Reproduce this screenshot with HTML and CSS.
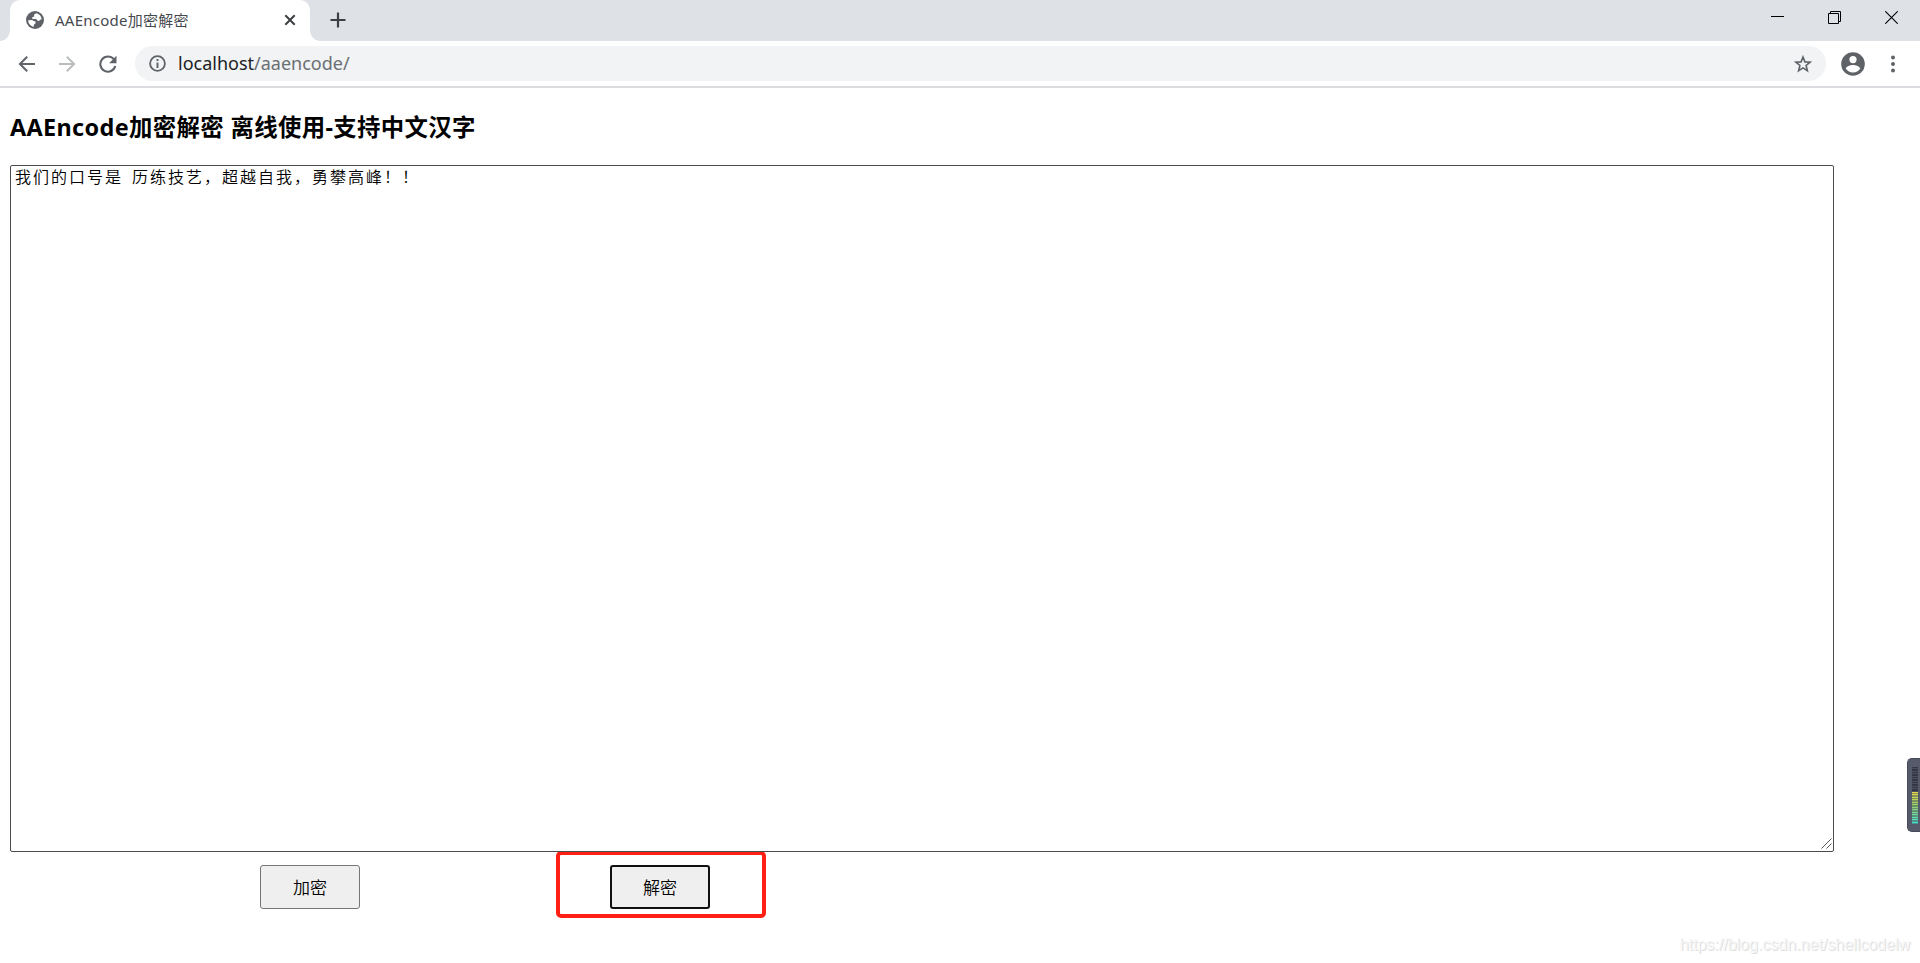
FILE: index.html
```html
<!DOCTYPE html>
<html lang="zh-CN">
<head>
  <meta charset="UTF-8" />
  <title>AAEncode加密解密</title>
  <link rel="stylesheet" href="styles.css">
</head>
<body>
  <div class="tabstrip">
    <div class="tab">
      <svg class="globe" width="18" height="18" viewBox="0 0 18 18">
        <circle cx="9" cy="9" r="9" fill="#5f6368"/>
        <path d="M10 2.2 8 3.8 8.2 5.4 6.2 6.2 6.4 8h3.8l1.2 1.6 1.5.4c.9-.6 1.2-1.6 2.7-1.7A6.8 6.8 0 0 0 10 2.2zM2.2 9.2c.1 3.4 2.4 6 5.6 6.5v-2l1.8-1.5-.1-1.8-2-.3-1.2-1.2z" fill="#fff"/>
      </svg>
      <span class="tab-title">AAEncode加密解密</span>
      <svg class="tab-close" width="12" height="12" viewBox="0 0 12 12"><path d="M1.3 1.3l9.4 9.4M10.7 1.3l-9.4 9.4" stroke="#3c4043" stroke-width="2"/></svg>
    </div>
    <svg class="new-tab" width="16" height="16" viewBox="0 0 16 16"><path d="M8 .5v15M.5 8h15" stroke="#3c4043" stroke-width="2.2"/></svg>
    <div class="win-buttons">
      <svg width="13" height="13" viewBox="0 0 13 13"><path d="M0 5.5h13" stroke="#000"/></svg>
      <svg width="13" height="13" viewBox="0 0 13 13" fill="none" stroke="#000"><path d="M.5 2.5h10v10H.5zM2.5 2.5v-2h10v10h-2"/></svg>
      <svg width="13" height="13" viewBox="0 0 13 13"><path d="M.3.3l12.4 12.4M12.7.3L.3 12.7" stroke="#000" stroke-width="1.1"/></svg>
    </div>
  </div>

  <div class="toolbar">
    <svg class="nav" width="18" height="18" viewBox="0 0 18 18" fill="none" stroke="#5f6368" stroke-width="2"><path d="M17 9H2.5M9.2 1.7L1.9 9l7.3 7.3"/></svg>
    <svg class="nav" width="18" height="18" viewBox="0 0 18 18" fill="none" stroke="#babcbe" stroke-width="2"><path d="M1 9h14.5M8.8 1.7L16.1 9l-7.3 7.3"/></svg>
    <svg class="nav reload" width="18" height="18" viewBox="0 0 18 18"><path d="M14.8 4.2A7.6 7.6 0 1 0 16.3 11" fill="none" stroke="#5f6368" stroke-width="2.1"/><path d="M17.5.8v7.4h-7.4z" fill="#5f6368"/></svg>
    <div class="omnibox">
      <svg width="17" height="17" viewBox="0 0 17 17"><circle cx="8.5" cy="8.5" r="7.4" fill="none" stroke="#5f6368" stroke-width="1.8"/><path d="M8.5 4v2M8.5 7.5V13" stroke="#5f6368" stroke-width="1.9"/></svg>
      <span class="url"><span class="host">localhost</span><span class="path">/aaencode/</span></span>
      <svg class="star" width="18" height="18" viewBox="0 0 18 18"><path d="M9 2l1.9 4.9 5.2.3-4 3.3 1.3 5.2L9 12.9l-4.4 2.8 1.3-5.2-4-3.3 5.2-.3z" fill="none" stroke="#5f6368" stroke-width="1.6"/></svg>
    </div>
    <svg class="avatar" width="24" height="24" viewBox="0 0 24 24"><circle cx="12" cy="12" r="11.8" fill="#5f6368"/><circle cx="12" cy="7.6" r="3.6" fill="#fff"/><path d="M4.8 16.8c0-2.5 4.8-3.8 7.2-3.8s7.2 1.3 7.2 3.8A8.8 8.8 0 0 1 12 20.4a8.8 8.8 0 0 1-7.2-3.6z" fill="#fff"/></svg>
    <svg class="menu" width="4" height="18" viewBox="0 0 4 18" fill="#5f6368"><circle cx="2" cy="2.4" r="2"/><circle cx="2" cy="9" r="2"/><circle cx="2" cy="15.6" r="2"/></svg>
  </div>

  <div class="content">
    <h3>AAEncode加密解密 离线使用-支持中文汉字</h3>
    <div class="editor">
      <textarea id="text" spellcheck="false">我们的口号是 历练技艺，超越自我，勇攀高峰！！</textarea>
      <svg class="grip" width="11" height="11" viewBox="0 0 11 11"><path d="M.5 10.5l10-10M5.5 10.5l5-5" stroke="#555"/></svg>
    </div>
    <div class="buttons">
      <button>加密</button>
      <div class="marked"><button class="active">解密</button></div>
    </div>
  </div>

  <div class="meter"><div class="meter-off"></div><div class="meter-on"></div></div>
  <div class="watermark">https://blog.csdn.net/shellcodelw</div>
</body>
</html>
```
FILE: styles.css
```css
body {
  margin: 0;
  height: 963px;
  overflow: hidden;
  background: #fff;
  font-family: "Noto Sans", "Noto Sans CJK SC", sans-serif;
}

svg {
  display: block;
  flex: none;
}

.tabstrip {
  display: flex;
  height: 41px;
  padding-left: 10px;
  background: #dee1e6;
}

.tab {
  position: relative;
  display: flex;
  align-items: center;
  box-sizing: border-box;
  width: 300px;
  padding: 0 14px 1px 16px;
  border-radius: 10px 10px 0 0;
  background: #fff;
}

/* curved feet of the active tab */
.tab::before,
.tab::after {
  content: "";
  position: absolute;
  bottom: 0;
  width: 10px;
  height: 10px;
}

.tab::before {
  left: -10px;
  background: radial-gradient(circle at 0 0, #dee1e6 9.5px, #fff 10px);
}

.tab::after {
  right: -10px;
  background: radial-gradient(circle at 100% 0, #dee1e6 9.5px, #fff 10px);
}

.tab-title {
  flex: 1;
  margin-left: 11px;
  font-size: 15px;
  line-height: 20px;
  letter-spacing: 0.25px;
  color: #45494d;
}

.new-tab {
  margin: 12px 0 0 20px;
}

.win-buttons {
  display: flex;
  gap: 44px;
  margin: 11px 22px 0 auto;
}

.toolbar {
  display: flex;
  align-items: center;
  height: 45px;
  padding: 0 25px 0 18px;
  border-bottom: 2px solid #dadce0;
}

.nav {
  margin-right: 22px;
}

.reload {
  margin-left: 1px;
}

.omnibox {
  flex: 1;
  display: flex;
  align-items: center;
  box-sizing: border-box;
  height: 35px;
  margin-left: -4px;
  padding: 0 14px;
  border-radius: 18px;
  background: #f1f3f4;
}

.url {
  flex: 1;
  margin-left: 12px;
  padding-bottom: 2px;
  font-size: 18px;
  line-height: 26px;
}

.host {
  color: #202124;
}

.path {
  color: #6b6f73;
}

.avatar {
  margin-left: 15px;
}

.menu {
  margin-left: 26px;
}

.content {
  padding: 0 10px;
}

h3 {
  margin: 22px 0 21px;
  font-size: 23.4px;
  line-height: 34px;
  letter-spacing: 0.36px;
  white-space: nowrap;
  color: #000;
}

.editor {
  position: relative;
  width: 1824px;
}

textarea {
  display: block;
  box-sizing: border-box;
  width: 100%;
  height: 687px;
  padding: 0 4px;
  border: 1px solid #4c4c4c;
  border-radius: 2px;
  resize: none;
  font-family: "Noto Sans CJK SC", monospace;
  font-size: 16px;
  font-weight: 350;
  line-height: 20px;
  letter-spacing: 2px;
  word-spacing: 3.5px;
  color: #000;
}

.grip {
  position: absolute;
  right: 2px;
  bottom: 3px;
}

.buttons {
  display: flex;
  align-items: flex-start;
  padding-left: 250px;
}

button {
  box-sizing: border-box;
  width: 100px;
  height: 44px;
  margin-top: 13px;
  padding: 0 0 2px;
  border: 1px solid #767676;
  border-radius: 3px;
  background: #efefef;
  font-family: "Noto Sans CJK SC", sans-serif;
  font-size: 17px;
  font-weight: 350;
  color: #000;
}

.active {
  margin: 0;
  border: 2px solid #101010;
}

.marked {
  box-sizing: border-box;
  width: 210px;
  height: 67px;
  margin: -1px 0 0 196px;
  padding: 10px 0 0 50px;
  border: 4px solid #ff2015;
  border-radius: 5px;
}

/* widget docked on the right screen edge */
.meter {
  position: absolute;
  right: 0;
  top: 758px;
  box-sizing: border-box;
  width: 13px;
  height: 74px;
  padding: 8px 0 0 4px;
  border: 1px solid #464a57;
  border-right: 0;
  border-radius: 5px 0 0 5px;
  background: #555b6b;
}

.meter-off {
  width: 6px;
  height: 25px;
  background: repeating-linear-gradient(#343844 0 1.2px, #4b5060 1.2px 2.5px);
}

.meter-on {
  width: 6px;
  height: 32px;
  background:
    repeating-linear-gradient(transparent 0 1px, rgba(70, 80, 90, 0.5) 1px 2.5px),
    linear-gradient(#e8d94a, #9bd069 40%, #45e0cf);
}

.watermark {
  position: absolute;
  right: 10px;
  top: 936px;
  font: 16px/18px "Liberation Sans", sans-serif;
  color: #f6f6f6;
  text-shadow: 1px 1px 0 #dedede;
}
```
